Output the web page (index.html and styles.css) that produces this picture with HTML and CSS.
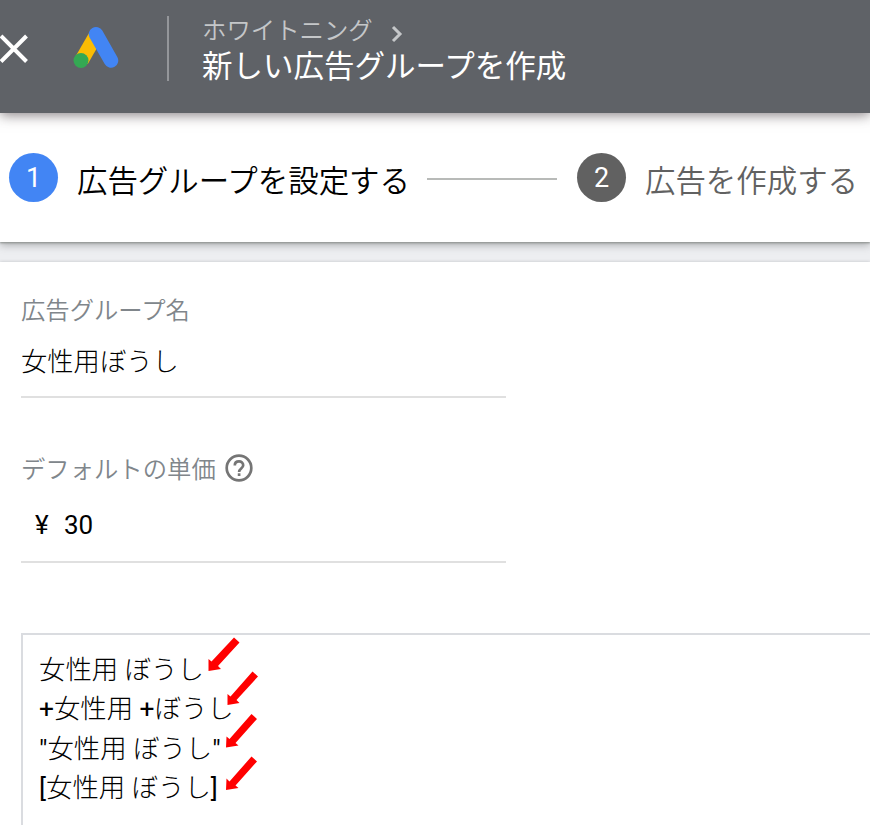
FILE: index.html
```html
<!DOCTYPE html>
<html lang="ja">
<head>
<meta charset="utf-8">
<title>新しい広告グループを作成</title>
<link rel="stylesheet" href="styles.css">
</head>
<body>
<header class="topbar">
  <svg class="close" viewBox="0 0 30 32"><path d="M1 3 26.5 28.5M26.5 3 1 28.5"/></svg>
  <svg class="logo" viewBox="0 0 48 46">
    <path class="logo-yellow" d="M9.5 34.5 23 11" />
    <path class="logo-blue" d="M24 8.200 39 34.500" />
    <circle class="logo-green" cx="9" cy="34.500" r="7.500"/>
  </svg>
  <div class="divider"></div>
  <div class="heading">
    <div class="crumb"><span>ホワイトニング</span><svg class="chevron" viewBox="0 0 12 18"><path d="M2 2 9 9 2 16"/></svg></div>
    <h1 class="title">新しい広告グループを作成</h1>
  </div>
</header>
<nav class="steps">
  <span class="badge active">1</span>
  <span class="step current">広告グループを設定する</span>
  <span class="connector"></span>
  <span class="badge">2</span>
  <span class="step">広告を作成する</span>
</nav>
<main class="card">
  <section class="field">
    <div class="label">広告グループ名</div>
    <div class="value">女性用ぼうし</div>
  </section>
  <section class="field price">
    <div class="label">デフォルトの単価
      <svg class="help" viewBox="0 0 28 28"><circle cx="14" cy="14" r="12.300"/><path d="M9.800 11.400c0-2.600 1.800-4.100 4.200-4.100s4.200 1.600 4.200 3.900c0 3.200-4.100 3.300-4.100 6.700"/><path d="M14.100 19.300v2.700"/></svg>
    </div>
    <div class="value amount"><span class="yen">¥</span><span>30</span></div>
  </section>
  <div class="keywords">
    <div class="row">女性用 ぼうし</div>
    <div class="row"><b>+</b>女性用 <b>+</b>ぼうし</div>
    <div class="row"><b>"</b>女性用 ぼうし<b>"</b></div>
    <div class="row"><b>[</b>女性用 ぼうし<b>]</b></div>
    <svg class="arrows" viewBox="200 630 70 165">
      <path d="M234 637.500 239.500 642.500 218 666 221 669 208.500 671 208.500 659 211.500 661.500Z"/>
      <path d="M252.500 671.500 258 676.500 236.500 700 239.500 703 227.500 705 227.500 694 230.500 696.500Z"/>
      <path d="M251.500 714 257 719 235.500 743 238.500 745.500 226 747.500 226.500 736.500 229.500 739Z"/>
      <path d="M251.500 756.500 257 761.500 235.500 785.500 238.500 788 226 790 226.500 778.500 229.500 781.500Z"/>
    </svg>
  </div>
</main>
</body>
</html>
```

FILE: styles.css
```css
* { box-sizing: border-box; }
body {
  margin: 0;
  height: 825px;
  overflow: hidden;
  background: #edeef1;
  color: #000;
  font-family: Roboto, "Noto Sans CJK JP", sans-serif;
  white-space: nowrap;
}
svg { display: block; flex: none; }
.topbar {
  display: flex;
  align-items: flex-start;
  height: 113px;
  background: #5f6267;
  position: relative;
  z-index: 2;
  box-shadow: 0 2px 12px rgba(70, 60, 65, .65);
}
.close { width: 30px; height: 32px; margin-top: 33px; fill: none; stroke: #fff; stroke-width: 4; }
.logo { width: 48px; height: 46px; margin: 26px 0 0 42px; fill: none; stroke-width: 14.500; }
.logo-yellow { stroke: #fbbc04; }
.logo-blue { stroke: #4285f4; stroke-linecap: round; }
.logo-green { fill: #34a853; }
.divider { width: 2px; height: 65px; margin: 16px 0 0 47px; background: #94969a; }
.heading { margin: 13px 0 0 33px; }
.crumb { display: flex; align-items: center; height: 36px; color: #c5c7c9; font-size: 24.400px; font-weight: 350; line-height: 36px; }
.chevron { width: 12px; height: 18px; margin: 6px 0 0 18px; fill: none; stroke: #c5c7c9; stroke-width: 3; }
.title { margin: 1px 0 0; color: #fff; font-size: 30.500px; font-weight: 400; line-height: 34px; }
.steps {
  display: flex;
  align-items: center;
  height: 129px;
  padding-left: 9px;
  background: #fff;
  position: relative;
  z-index: 1;
  box-shadow: 0 1px 2px #8b908d, 0 3px 8px rgba(70, 75, 75, .4);
}
.badge { width: 49px; height: 49px; border-radius: 50%; background: #616161; color: #fff; font-size: 27px; line-height: 51px; text-align: center; }
.badge.active { background: #4285f4; }
.step { margin-left: 19px; color: #616161; font: 350 30.450px/44px "Noto Sans CJK JP", sans-serif; padding-top: 2px; }
.step.current { color: #000; }
.connector { width: 130px; height: 2px; margin: 2px 20px 0 17px; background: #b8bab8; }
.card { height: 563px; margin-top: 20px; padding: 29px 0 0 21px; background: #fff; box-shadow: 0 0 3px rgba(60, 64, 67, .25); }
.field { width: 485px; height: 107px; border-bottom: 2px solid #e0e0e0; }
.label { display: flex; align-items: center; height: 36px; color: #80868b; font: 350 24.350px/36px "Noto Sans CJK JP", sans-serif; }
.value { margin-top: 14px; font: 300 26.300px/38px "Noto Sans CJK JP", sans-serif; }
.price { height: 113px; margin-top: 52px; }
.help { width: 28px; height: 28px; margin-left: 9px; fill: none; stroke: #757575; stroke-width: 2.700; }
.amount { display: flex; gap: 14px; margin: 20px 0 0 14px; font: 400 26px/38px Roboto, sans-serif; }
.yen { width: 15px; }
.keywords { position: relative; height: 220px; margin: 70px -4px 0 0; padding: 16px 0 0 16px; border: 2px solid #dadce0; }
.row { height: 39.400px; font: 300 26.400px/39.400px Roboto, "Noto Sans CJK JP", sans-serif; }
.row b { font-weight: 400; }
.arrows { position: absolute; left: 177px; top: -5px; width: 70px; height: 165px; fill: #f00; }
```
